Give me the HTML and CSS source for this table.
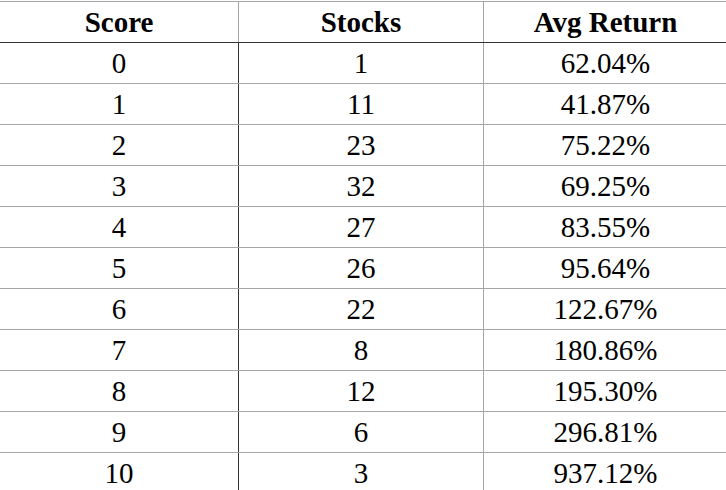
FILE: index.html
```html
<!DOCTYPE html>
<html>
<head>
<meta charset="utf-8">
<link rel="stylesheet" href="styles.css">
</head>
<body>
<table class="score-table">
  <thead>
    <tr><th class="c1">Score</th><th class="c2">Stocks</th><th class="c3">Avg Return</th></tr>
  </thead>
  <tbody>
    <tr><td class="c1">0</td><td class="c2">1</td><td class="c3">62.04%</td></tr>
    <tr><td class="c1">1</td><td class="c2">11</td><td class="c3">41.87%</td></tr>
    <tr><td class="c1">2</td><td class="c2">23</td><td class="c3">75.22%</td></tr>
    <tr><td class="c1">3</td><td class="c2">32</td><td class="c3">69.25%</td></tr>
    <tr><td class="c1">4</td><td class="c2">27</td><td class="c3">83.55%</td></tr>
    <tr><td class="c1">5</td><td class="c2">26</td><td class="c3">95.64%</td></tr>
    <tr><td class="c1">6</td><td class="c2">22</td><td class="c3">122.67%</td></tr>
    <tr><td class="c1">7</td><td class="c2">8</td><td class="c3">180.86%</td></tr>
    <tr><td class="c1">8</td><td class="c2">12</td><td class="c3">195.30%</td></tr>
    <tr><td class="c1">9</td><td class="c2">6</td><td class="c3">296.81%</td></tr>
    <tr><td class="c1">10</td><td class="c2">3</td><td class="c3">937.12%</td></tr>
  </tbody>
</table>
</body>
</html>
```
FILE: styles.css
```css
html, body {
  margin: 0;
  padding: 0;
  background: #ffffff;
  overflow: hidden;
}
body {
  padding-top: 1px;
}
.score-table {
  border-collapse: collapse;
  table-layout: fixed;
  width: 727px;
  font-family: "Liberation Serif", "Times New Roman", serif;
  color: #000;
}
.score-table th,
.score-table td {
  height: 40px;
  padding: 0;
  text-align: center;
  vertical-align: middle;
  border-top: 1px solid #a6a6a6;
  border-bottom: 1px solid #a6a6a6;
  line-height: 40px;
}
.score-table th {
  font-weight: bold;
  font-size: 29px;
  border-bottom: 1px solid #333333;
}
.score-table td {
  font-size: 29px;
  font-weight: normal;
}
.c1 { width: 238px; }
.c2 { width: 244px; }
.c3 { width: 243px; }
.score-table th.c1 { border-right: 1px solid #a6a6a6; }
.score-table td.c1 { border-right: 1px solid #333333; }
.score-table .c2 { border-right: 1px solid #a6a6a6; }
```
